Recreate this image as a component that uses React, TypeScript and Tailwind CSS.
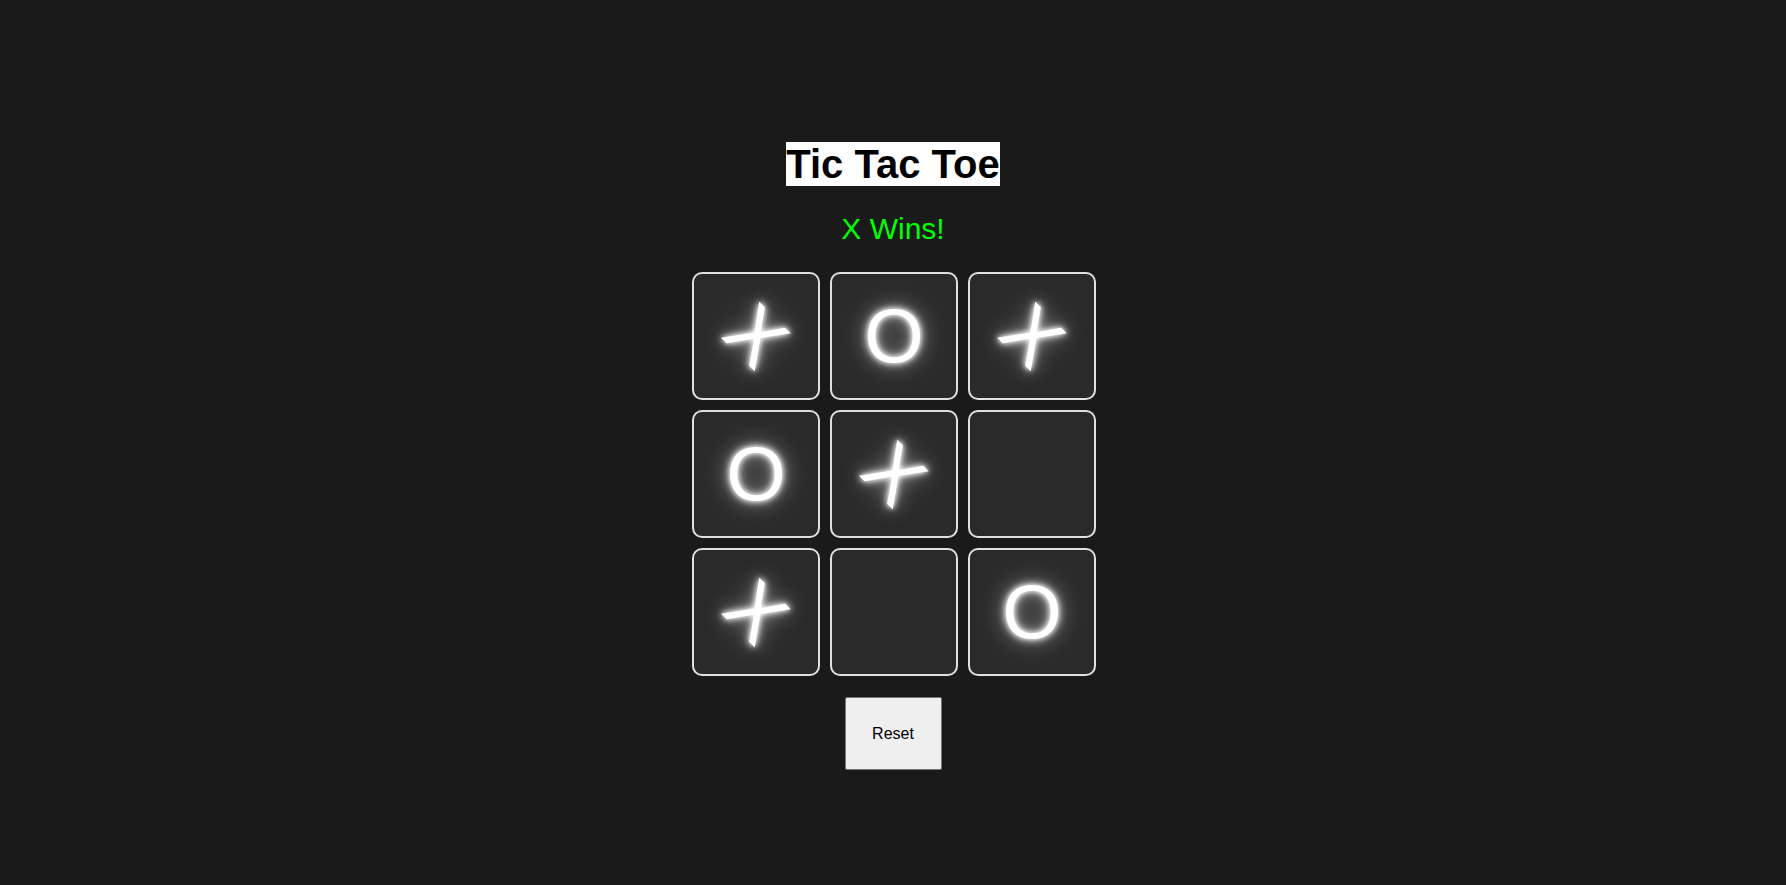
import { useState } from "react";

type Cell = "X" | "O" | null;

const initial: Cell[] = ["X", "O", "X", "O", "X", null, "X", null, "O"];

export default function App() {
  const [board, setBoard] = useState<Cell[]>(initial);

  return (
    <div className="min-h-screen w-full bg-[#1a1a1a] font-['Liberation_Sans',Arial,sans-serif]">
      <div className="flex flex-col items-center pt-[142px]">
        <h1 className="inline-block bg-white text-black text-[40px] font-bold leading-[44px]">
          Tic Tac Toe
        </h1>

        <p className="mt-[26px] text-[30px] leading-[34px] text-[#00ff00]">X Wins!</p>

        <div className="mt-[26px] ml-[2px] grid grid-cols-[repeat(3,128px)] gap-[10px]">
          {board.map((cell, i) => (
            <div
              key={i}
              className="flex h-[128px] w-[128px] items-center justify-center rounded-[10px] border-2 border-[#e0e0e0] bg-[#2a2a2a]"
            >
              {cell && (
                <span
                  className={
                    "inline-block text-[76px] leading-[84px] text-white [text-shadow:0_0_5px_#fff,0_0_10px_#fff,0_0_20px_rgba(255,255,255,0.6),0_0_40px_rgba(255,255,255,0.3)] " +
                    (cell === "X" ? "rotate-45" : "")
                  }
                >
                  {cell}
                </span>
              )}
            </div>
          ))}
        </div>

        <button
          onClick={() => setBoard(Array(9).fill(null))}
          className="mt-[21px] h-[73px] w-[97px] rounded-[2px] border border-[#767676] bg-[#efefef] text-[16px] text-black"
        >
          Reset
        </button>
      </div>
    </div>
  );
}
